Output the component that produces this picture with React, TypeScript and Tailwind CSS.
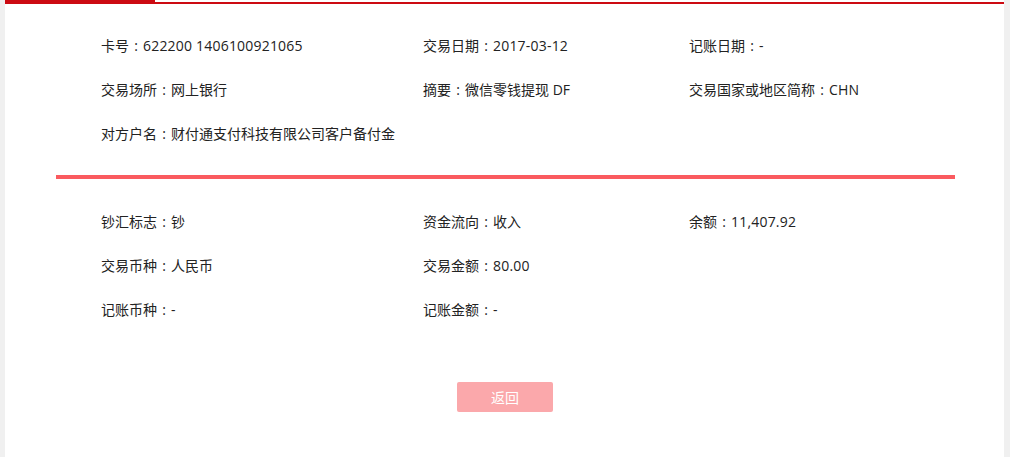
import React from "react";

const font = { fontFamily: '"Open Sans", "Noto Sans CJK SC", sans-serif' };

function Field({ label, value }: { label: string; value: string }) {
  const ascii = /^[\x00-\x7f]+$/.test(value);
  return (
    <div className="h-[44px] flex items-center whitespace-nowrap">
      <span>{label}</span>
      <span className="w-[14px] text-center">:</span>
      <span className={ascii ? "tracking-[0.2px]" : ""}>{value}</span>
    </div>
  );
}

export default function App() {
  return (
    <div className="w-[1010px] h-[457px] bg-[#f0f0f0] overflow-hidden" style={font}>
      <div className="ml-[5px] w-[999px] h-[457px] bg-white text-[14px] text-[#222]">
        <div className="flex h-[4px]">
          <div className="w-[150px] h-[4px] bg-[#cc0a12]" />
          <div className="flex-1 flex flex-col justify-end">
            <div className="h-[2px] bg-[#cc0a12]" />
          </div>
        </div>
        <div className="pt-[19px] pl-[96px] grid grid-cols-[322px_266px_1fr]">
          <Field label="卡号" value="622200 1406100921065" />
          <Field label="交易日期" value="2017-03-12" />
          <Field label="记账日期" value="-" />
          <Field label="交易场所" value="网上银行" />
          <Field label="摘要" value="微信零钱提现 DF" />
          <Field label="交易国家或地区简称" value="CHN" />
          <Field label="对方户名" value="财付通支付科技有限公司客户备付金" />
        </div>
        <div className="mt-[20px] ml-[51px] w-[899px] h-[4px] bg-[#fa5a5f]" />
        <div className="pt-[20px] pl-[96px] grid grid-cols-[322px_266px_1fr]">
          <Field label="钞汇标志" value="钞" />
          <Field label="资金流向" value="收入" />
          <Field label="余额" value="11,407.92" />
          <Field label="交易币种" value="人民币" />
          <Field label="交易金额" value="80.00" />
          <div />
          <Field label="记账币种" value="-" />
          <Field label="记账金额" value="-" />
        </div>
        <div className="mt-[51px] flex justify-center">
          <button className="ml-[1px] w-[96px] h-[30px] rounded-[2px] bg-[#fba8ab] text-white text-[14px] flex items-center justify-center">
            返回
          </button>
        </div>
      </div>
    </div>
  );
}
